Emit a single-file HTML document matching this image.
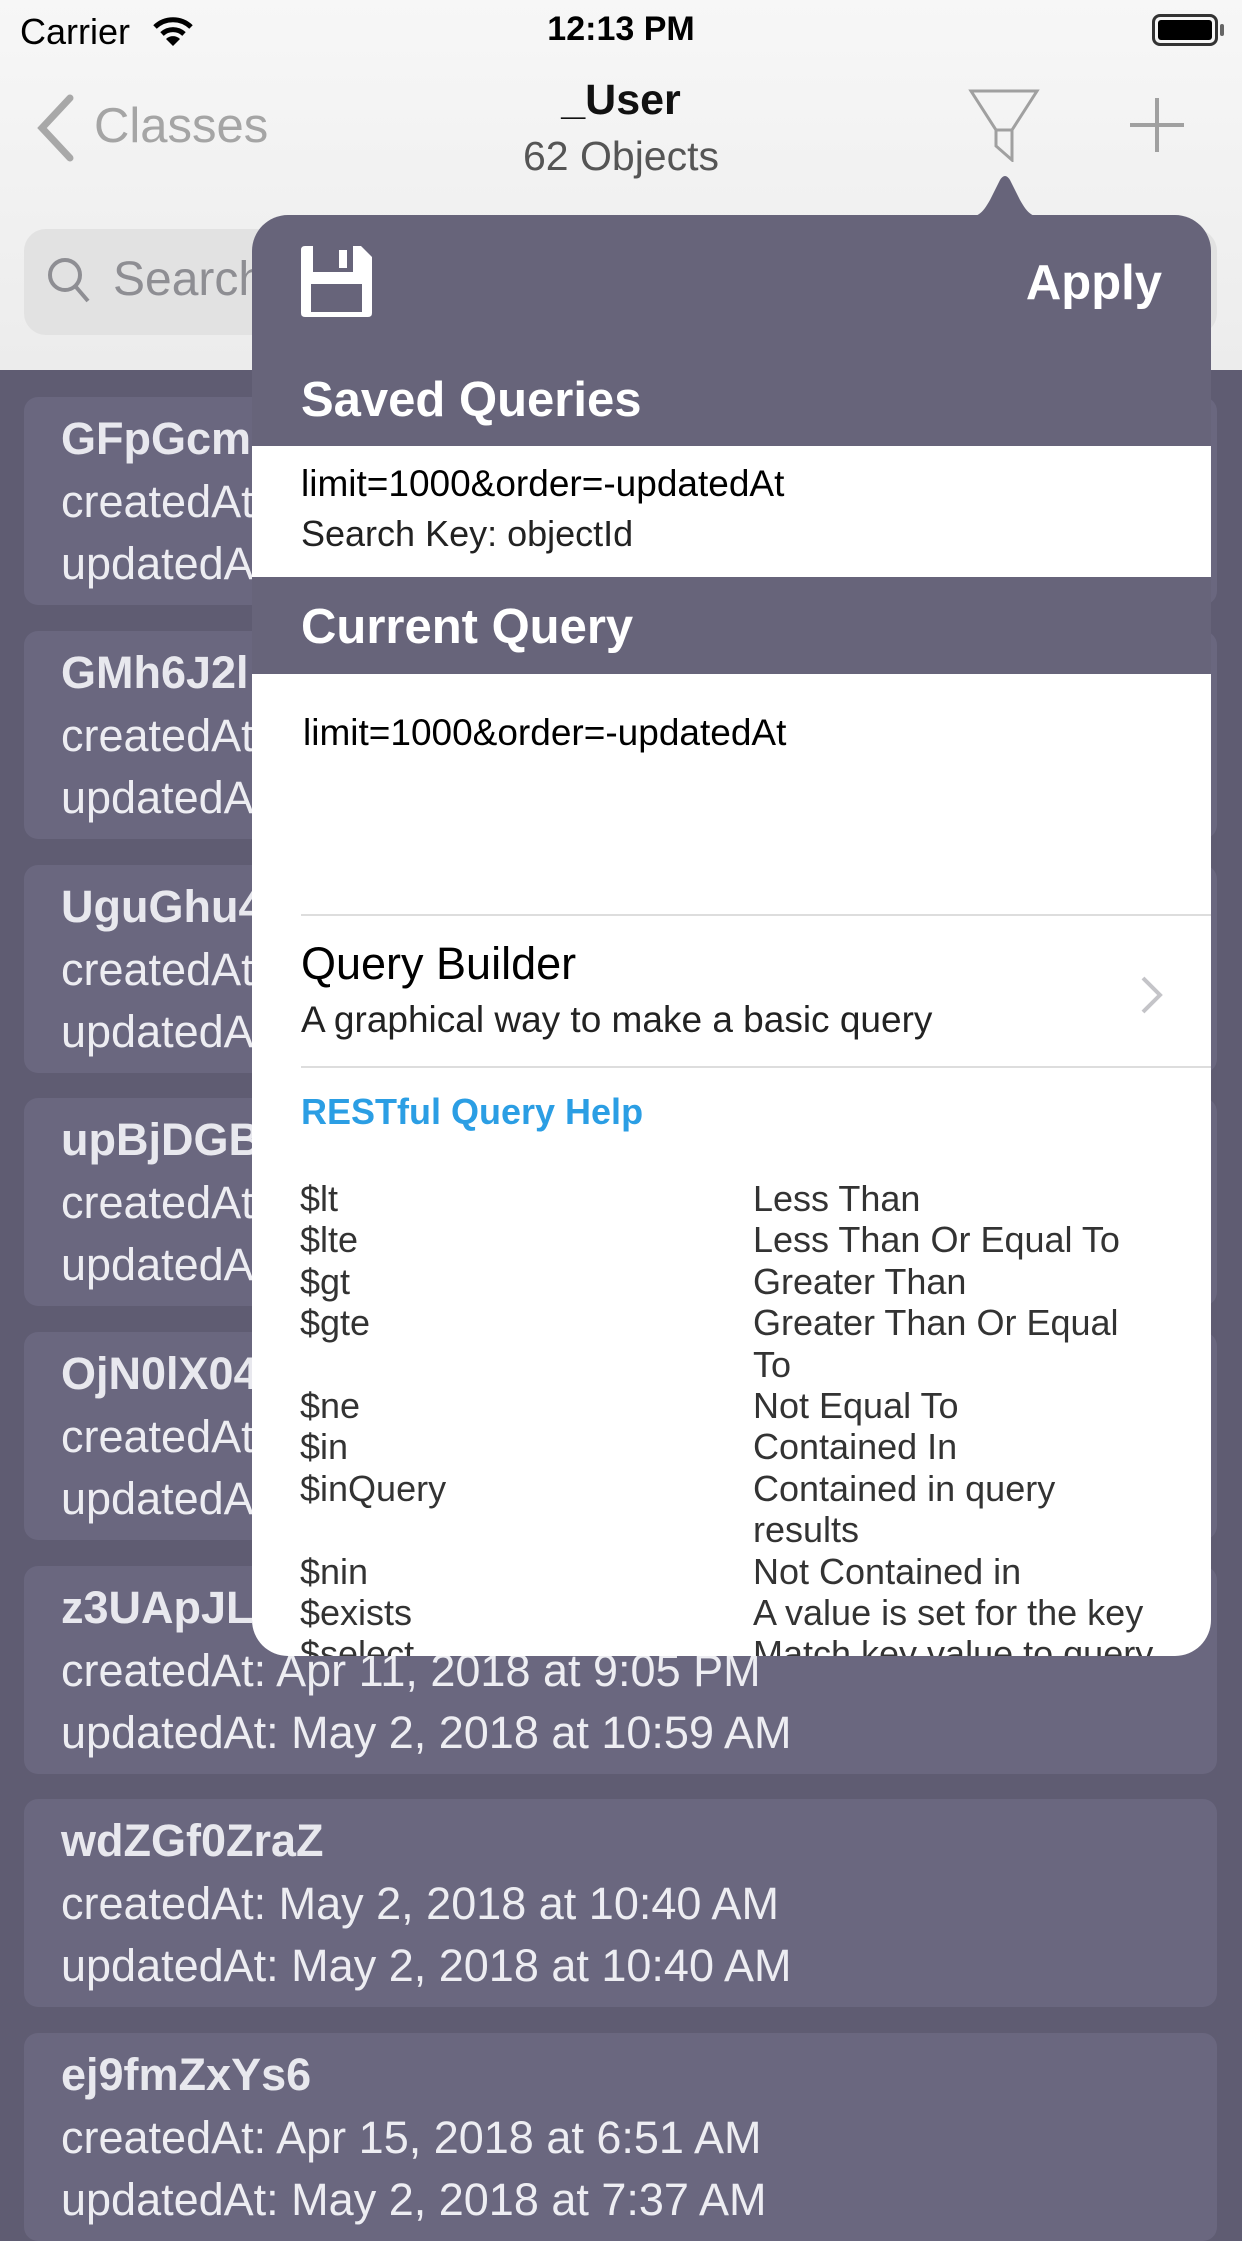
<!DOCTYPE html>
<html><head><meta charset="utf-8"><style>
*{margin:0;padding:0;box-sizing:border-box}
body{width:1242px;height:2208px;overflow:hidden;position:relative;font-family:"Liberation Sans",sans-serif;background:#5f5c72}
.a{position:absolute;white-space:nowrap}
.hdr{position:absolute;left:0;top:0;width:1242px;height:370px;background:linear-gradient(#f7f7f7,#ececec)}
.card{position:absolute;left:24px;width:1193px;height:208px;background:#6a677f;border-radius:14px;color:#ededf2}
.card .t{position:absolute;left:37px;top:16px;font-size:45px;font-weight:bold;color:#e8e8ee}
.card .l1{position:absolute;left:37px;top:79px;font-size:45px}
.card .l2{position:absolute;left:37px;top:141px;font-size:45px}
.pop{position:absolute;left:252px;top:215px;width:959px;height:1441px;background:#67647a;border-radius:36px;overflow:hidden}
.row{position:absolute;font-size:36px;color:#333}
</style></head><body>
<div class="hdr"></div>
<div class="a" style="left:20px;top:11px;font-size:36px;color:#000">Carrier</div>
<svg class="a" style="left:152px;top:16px" width="42" height="32" viewBox="0 0 42 32"><path d="M3 11 A26 26 0 0 1 39 11" stroke="#000" stroke-width="5" fill="none"/><path d="M10 18 A16 16 0 0 1 32 18" stroke="#000" stroke-width="5" fill="none"/><path d="M21 30 L14 23 A10 10 0 0 1 28 23 Z" fill="#000"/></svg>
<div class="a" style="left:0;width:1242px;text-align:center;top:10px;font-size:34px;font-weight:bold">12:13 PM</div>
<div class="a" style="left:1152px;top:14px;width:66px;height:32px;border:3px solid #333;border-radius:8px;padding:3px"><div style="width:100%;height:100%;background:#000;border-radius:3px"></div></div>
<div class="a" style="left:1220px;top:24px;width:4px;height:12px;background:#666;border-radius:2px"></div>
<svg class="a" style="left:36px;top:94px" width="40" height="68" viewBox="0 0 40 68"><path d="M34 4 L6 34 L34 64" stroke="#a8a8a8" stroke-width="7" fill="none" stroke-linecap="round"/></svg>
<div class="a" style="left:94px;top:98px;font-size:49px;color:#a5a5a5">Classes</div>
<div class="a" style="left:0;width:1242px;text-align:center;top:76px;font-size:43px;font-weight:bold;color:#111">_User</div>
<div class="a" style="left:0;width:1242px;text-align:center;top:133px;font-size:41px;color:#555">62 Objects</div>
<svg class="a" style="left:968px;top:88px" width="72" height="74" viewBox="0 0 72 74"><path d="M3 3 H69 L44 42 V72 L28 58 V42 Z" stroke="#a0a0a0" stroke-width="3" fill="none"/><path d="M28 42 H44" stroke="#a0a0a0" stroke-width="3"/></svg>
<svg class="a" style="left:1130px;top:98px" width="54" height="54"><path d="M27 0 V54 M0 27 H54" stroke="#a0a0a0" stroke-width="4"/></svg>
<div class="a" style="left:24px;top:229px;width:1193px;height:106px;background:#e2e2e2;border-radius:22px"></div>
<svg class="a" style="left:46px;top:256px" width="46" height="50"><circle cx="19" cy="19" r="15" stroke="#8e8e93" stroke-width="4" fill="none"/><path d="M30 31 L42 45" stroke="#8e8e93" stroke-width="4"/></svg>
<div class="a" style="left:113px;top:252px;font-size:48px;color:#8e8e93">Search</div>

<div class="card" style="top:397px"><div class="t">GFpGcm0</div><div class="l1">createdAt</div><div class="l2">updatedAt</div></div>
<div class="card" style="top:631px"><div class="t">GMh6J2l</div><div class="l1">createdAt</div><div class="l2">updatedAt</div></div>
<div class="card" style="top:865px"><div class="t">UguGhu4</div><div class="l1">createdAt</div><div class="l2">updatedAt</div></div>
<div class="card" style="top:1098px"><div class="t">upBjDGB</div><div class="l1">createdAt</div><div class="l2">updatedAt</div></div>
<div class="card" style="top:1332px"><div class="t">OjN0lX04</div><div class="l1">createdAt</div><div class="l2">updatedAt</div></div>
<div class="card" style="top:1566px"><div class="t">z3UApJL</div><div class="l1">createdAt: Apr 11, 2018 at 9:05 PM</div><div class="l2">updatedAt: May 2, 2018 at 10:59 AM</div></div>
<div class="card" style="top:1799px"><div class="t">wdZGf0ZraZ</div><div class="l1">createdAt: May 2, 2018 at 10:40 AM</div><div class="l2">updatedAt: May 2, 2018 at 10:40 AM</div></div>
<div class="card" style="top:2033px"><div class="t">ej9fmZxYs6</div><div class="l1">createdAt: Apr 15, 2018 at 6:51 AM</div><div class="l2">updatedAt: May 2, 2018 at 7:37 AM</div></div>

<svg class="a" style="left:960px;top:174px" width="90" height="44" viewBox="0 0 90 44"><path d="M0 44 C18 44 22 40 30 26 L40 6 Q45 -2 50 6 L60 26 C68 40 72 44 90 44 Z" fill="#67647a"/></svg>
<div class="pop">
<svg class="a" style="left:49px;top:31px" width="71" height="71" viewBox="0 0 71 71"><path d="M4 0 H60 L71 11 V67 Q71 71 67 71 H4 Q0 71 0 67 V4 Q0 0 4 0 Z" fill="#fff"/><rect x="12" y="0" width="40" height="26" fill="#67647a"/><rect x="38" y="4" width="8" height="18" fill="#fff"/><rect x="10" y="38" width="51" height="28" fill="#67647a"/></svg>
<div class="a" style="right:49px;top:40px;font-size:49px;font-weight:bold;color:#fff">Apply</div>
<div class="a" style="left:49px;top:157px;font-size:49px;font-weight:bold;color:#fff">Saved Queries</div>
<div class="a" style="left:0;top:231px;width:959px;height:131px;background:#fff"></div>
<div class="a" style="left:49px;top:248px;font-size:37px;color:#000">limit=1000&amp;order=-updatedAt</div>
<div class="a" style="left:49px;top:298px;font-size:36px;color:#222">Search Key: objectId</div>
<div class="a" style="left:49px;top:384px;font-size:49px;font-weight:bold;color:#fff">Current Query</div>
<div class="a" style="left:0;top:459px;width:959px;height:1000px;background:#fff"></div>
<div class="a" style="left:51px;top:497px;font-size:37px;color:#000">limit=1000&amp;order=-updatedAt</div>
<div class="a" style="left:49px;top:699px;width:910px;height:2px;background:#ddd"></div>
<div class="a" style="left:49px;top:723px;font-size:45px;color:#000">Query Builder</div>
<div class="a" style="left:49px;top:784px;font-size:37px;color:#222">A graphical way to make a basic query</div>
<svg class="a" style="left:888px;top:760px" width="24" height="40"><path d="M3 3 L20 20 L3 37" stroke="#c4c4c8" stroke-width="4" fill="none"/></svg>
<div class="a" style="left:49px;top:851px;width:910px;height:2px;background:#ddd"></div>
<div class="a" style="left:49px;top:876px;font-size:36px;font-weight:bold;color:#2b9ee4">RESTful Query Help</div>
<div class="row" style="left:48px;top:963px;line-height:41.4px">$lt<br>$lte<br>$gt<br>$gte<br><br>$ne<br>$in<br>$inQuery<br><br>$nin<br>$exists<br>$select</div>
<div class="row" style="left:501px;top:963px;line-height:41.4px">Less Than<br>Less Than Or Equal To<br>Greater Than<br>Greater Than Or Equal<br>To<br>Not Equal To<br>Contained In<br>Contained in query<br>results<br>Not Contained in<br>A value is set for the key<br>Match key value to query</div>
</div>
</body></html>
